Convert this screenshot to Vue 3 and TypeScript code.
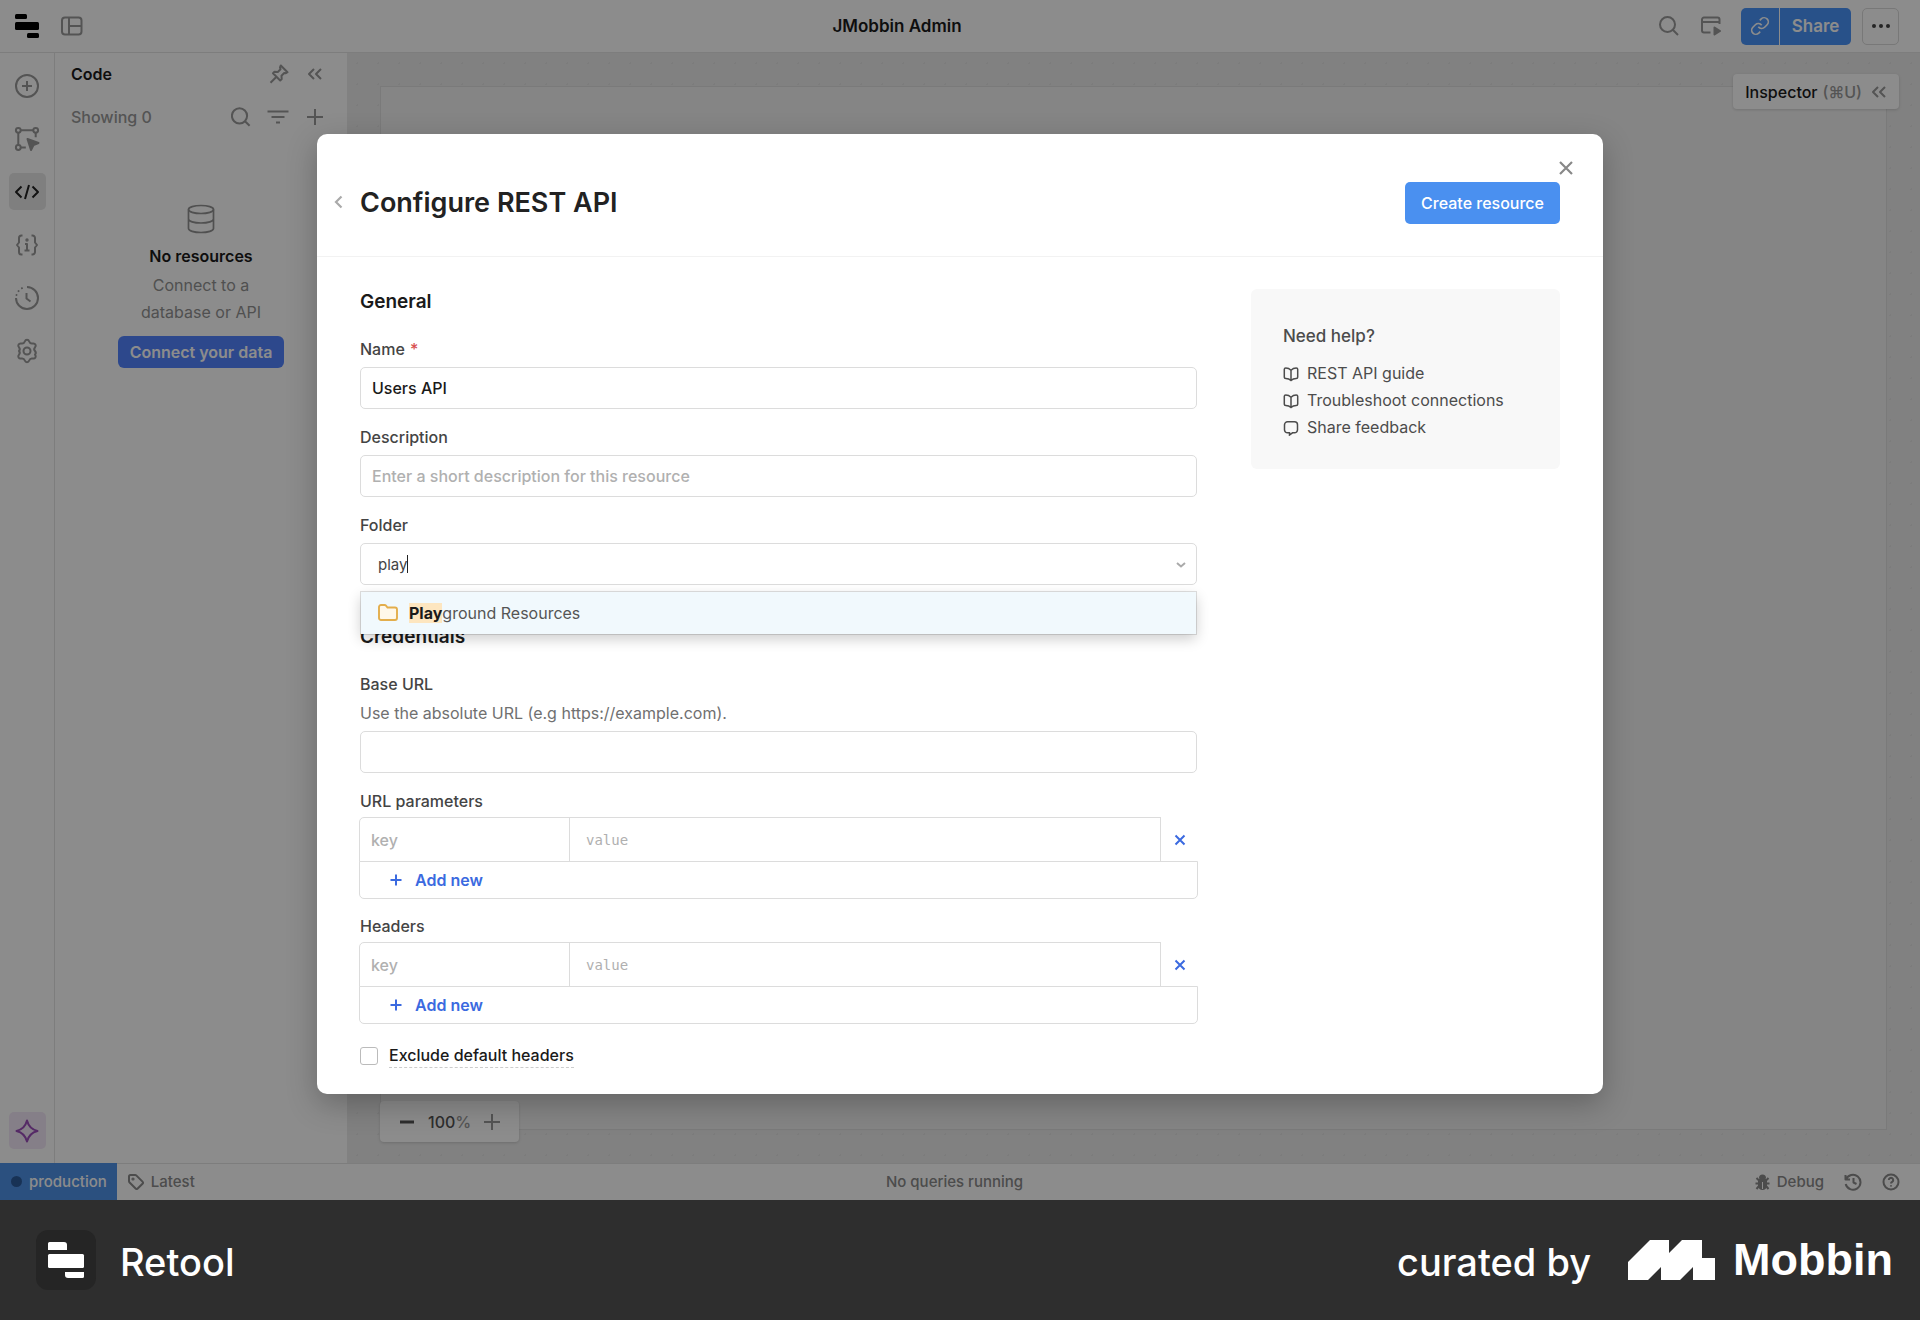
<script setup lang="ts">
import { ref } from 'vue'

interface KeyValueGroup {
  id: string
  title: string
}

const name = ref('Users API')
const description = ref('')
const folder = ref('play')
const baseUrl = ref('')
const excludeDefaults = ref(false)

const groups: KeyValueGroup[] = [
  { id: 'url-params', title: 'URL parameters' },
  { id: 'headers', title: 'Headers' },
]
</script>

<template>
  <div class="page">
    <div class="app">
      <header class="topbar">
        <div class="topbar-side">
          <svg class="logo" width="24" height="24" viewBox="0 0 24 24" aria-label="Retool">
            <rect x="0" y="0" width="12" height="5" rx="1.5" />
            <rect x="0" y="8" width="24" height="8" rx="1.5" />
            <rect x="12" y="19" width="12" height="5" rx="1.5" />
          </svg>
          <button class="icon-btn" aria-label="Toggle layout">
            <svg width="22" height="20" viewBox="0 0 22 20" class="line">
              <rect x="1" y="1.500" width="19.500" height="17" rx="3" />
              <path d="M8 1.500v17M8 10h12.500" />
            </svg>
          </button>
        </div>
        <h1 class="app-title">JMobbin Admin</h1>
        <div class="topbar-side end">
          <button class="icon-btn" aria-label="Search">
            <svg width="20" height="20" viewBox="0 0 20 20" class="line">
              <circle cx="8.500" cy="8.500" r="7.500" />
              <path d="M14 14l5 5" />
            </svg>
          </button>
          <button class="icon-btn preview" aria-label="Preview">
            <svg width="20" height="20" viewBox="0 0 20 20" class="line">
              <path d="M9.500 16.500H3a2 2 0 0 1-2-2V3.500a2 2 0 0 1 2-2h13.500a2 2 0 0 1 2 2V8M1 6h17.500" />
              <path class="solid" d="M13.500 11.500l5.500 3.500-5.500 3.500z" />
            </svg>
          </button>
          <div class="share">
            <button aria-label="Copy link" class="share-link">
              <svg width="20" height="20" viewBox="0 0 24 24" class="line">
                <path d="M10 13a5 5 0 0 0 7.540.540l3-3a5 5 0 0 0-7.070-7.070l-1.720 1.710" />
                <path d="M14 11a5 5 0 0 0-7.540-.540l-3 3a5 5 0 0 0 7.070 7.070l1.710-1.710" />
              </svg>
            </button>
            <button class="share-text">Share</button>
          </div>
          <button class="more" aria-label="More">
            <svg width="18" height="6" viewBox="0 0 18 6">
              <circle cx="2" cy="3" r="2" /><circle cx="9" cy="3" r="2" /><circle cx="16" cy="3" r="2" />
            </svg>
          </button>
        </div>
      </header>

      <div class="workspace">
        <nav class="rail">
          <button aria-label="Add component">
            <svg width="26" height="26" viewBox="0 0 26 26" class="line">
              <circle cx="13" cy="13" r="11" /><path d="M13 8v10M8 13h10" />
            </svg>
          </button>
          <button aria-label="Component tree">
            <svg width="26" height="26" viewBox="0 0 26 26" class="line">
              <circle cx="4.300" cy="4.300" r="2.400" /><circle cx="21.700" cy="4.300" r="2.400" /><circle cx="4.300" cy="21.500" r="2.400" />
              <path d="M6.800 4.300h12.400M4.300 6.800V19M21.700 6.800v4.500M6.800 21.500h5" />
              <path class="solid" d="M13.500 13l11 4-5 2L17 24z" />
            </svg>
          </button>
          <button aria-label="Code" class="active">
            <svg width="26" height="26" viewBox="0 0 26 26" class="line">
              <path d="M7.500 7.500L2 13l5.500 5.500M18.500 7.500L24 13l-5.500 5.500M15 6l-4 14" />
            </svg>
          </button>
          <button aria-label="State">
            <svg width="26" height="26" viewBox="0 0 26 26" class="line">
              <path d="M8.500 3.500H7.500A2.500 2.500 0 0 0 5 6v4.500L3 13l2 2.500V20a2.500 2.500 0 0 0 2.500 2.500h1M17.500 3.500h1A2.500 2.500 0 0 1 21 6v4.500l2 2.500-2 2.500V20a2.500 2.500 0 0 1-2.500 2.500h-1M11 12h2v6.500M10.500 18.500h5" />
              <circle cx="13" cy="8" r=".7" />
            </svg>
          </button>
          <button aria-label="History">
            <svg width="26" height="26" viewBox="0 0 26 26" class="line">
              <path d="M13 2a11 11 0 1 1-11 11" /><path d="M12.500 8v5.500l4 3" />
              <path stroke-dasharray=".1 4.300" stroke-linecap="round" d="M2.500 10A11 11 0 0 1 10 2.400" />
            </svg>
          </button>
          <button aria-label="Settings">
            <svg width="26" height="26" viewBox="0 0 26 26" class="line">
              <circle cx="13" cy="13" r="3.500" />
              <path d="M10.800 3.500c.8-2.400 3.600-2.400 4.400 0 .6 1.700 1.800 2.300 3.500 2 2.500-.5 4 1.800 2.300 3.800-1.200 1.400-1.200 2.300-.1 3.600 0 0 .1.100.1.100 1.200 1.400 1.200 2.300 0 3.700 1.700 2 .2 4.300-2.300 3.800-1.700-.3-2.900.3-3.500 2-.8 2.400-3.600 2.400-4.400 0-.6-1.700-1.800-2.300-3.500-2-2.500.5-4-1.800-2.300-3.800 1.200-1.400 1.200-2.300 0-3.700 1.200-1.400 1.200-2.300 0-3.700C3.300 7.300 4.800 5 7.300 5.500c1.700.3 2.900-.3 3.500-2z" />
            </svg>
          </button>
          <button aria-label="AI assist" class="assist">
            <svg width="24" height="24" viewBox="0 0 24 24" class="line">
              <path d="M12 1.500c1.500 6 4.500 9 10.500 10.500-6 1.500-9 4.500-10.500 10.500C10.500 16.500 7.500 13.500 1.500 12 7.500 10.500 10.500 7.500 12 1.500z" />
            </svg>
          </button>
        </nav>

        <aside class="panel">
          <div class="panel-row">
            <h2>Code</h2>
            <div class="tools">
              <button class="icon-btn" aria-label="Pin">
                <svg width="20" height="20" viewBox="0 0 20 20" class="line">
                  <path d="M11.800 1.500l6.700 6.700-1.600 1-1.700-.2-2.700 2.700.2 3.300-1.500 1.500L4 9.300l1.500-1.500 3.300.2 2.700-2.700-.5-2zM7.500 12.800L1.500 18.800" />
                </svg>
              </button>
              <button class="icon-btn" aria-label="Collapse">
                <svg width="20" height="20" viewBox="0 0 20 20" class="line">
                  <path d="M9 5l-5 5 5 5M16 5l-5 5 5 5" />
                </svg>
              </button>
            </div>
          </div>
          <div class="panel-row">
            <span class="showing">Showing 0</span>
            <div class="tools">
              <button class="icon-btn" aria-label="Search code">
                <svg width="20" height="20" viewBox="0 0 20 20" class="line">
                  <circle cx="8.500" cy="8.800" r="7.600" /><path d="M14 14.200l4.600 4.600" />
                </svg>
              </button>
              <button class="icon-btn" aria-label="Filter">
                <svg width="22" height="20" viewBox="0 0 22 20" class="line">
                  <path d="M.5 4.500h21M4.500 10h13M9 15.500h4" />
                </svg>
              </button>
              <button class="icon-btn" aria-label="Add">
                <svg width="20" height="20" viewBox="0 0 20 20" class="line">
                  <path d="M10 2v16M2 10h16" />
                </svg>
              </button>
            </div>
          </div>
          <div class="empty">
            <svg width="28" height="30" viewBox="0 0 28 30" class="line">
              <ellipse cx="14" cy="5.500" rx="12.500" ry="4" />
              <path d="M1.500 5.500v19c0 2.200 5.500 4 12.500 4s12.500-1.800 12.500-4v-19M1.500 15c0 2.200 5.500 4 12.500 4s12.500-1.800 12.500-4" />
            </svg>
            <strong>No resources</strong>
            <p>Connect to a<br />database or API</p>
            <button class="connect">Connect your data</button>
          </div>
        </aside>

        <main class="canvas">
          <div class="frame"></div>
          <button class="inspector">
            <span>Inspector</span> <span class="muted">(⌘U)</span>
            <svg width="16" height="16" viewBox="0 0 16 16" class="line">
              <path d="M7 3L2 8l5 5M14 3L9 8l5 5" />
            </svg>
          </button>
          <div class="zoom">
            <button aria-label="Zoom out">
              <svg width="16" height="16" viewBox="0 0 16 16" class="line minus"><path d="M1 8h14" /></svg>
            </button>
            <span class="zoom-value">100<span class="muted">%</span></span>
            <button aria-label="Zoom in">
              <svg width="16" height="16" viewBox="0 0 16 16" class="line"><path d="M8 0v16M0 8h16" /></svg>
            </button>
          </div>
        </main>
      </div>

      <div class="statusbar">
        <div class="status-side">
          <button class="env"><span class="env-dot"></span>production</button>
          <button class="status-item">
            <svg width="16" height="16" viewBox="0 0 16 16" class="line">
              <path d="M1 2.500A1.500 1.500 0 0 1 2.500 1h4.600a2 2 0 0 1 1.400.6l6 6a1.500 1.500 0 0 1 0 2.100l-4.800 4.800a1.500 1.500 0 0 1-2.100 0l-6-6A2 2 0 0 1 1 7.100z" />
              <circle cx="5" cy="5" r=".6" />
            </svg>
            Latest
          </button>
        </div>
        <span class="queries">No queries running</span>
        <div class="status-side end">
          <button class="status-item debug">
            <svg width="15" height="16" viewBox="0 0 15 16" class="line">
              <path class="solid" d="M4 6h7v5.500a3.500 3.500 0 0 1-7 0zM5 4a2.500 2.500 0 0 1 5 0z" />
              <path d="M1.500 4l2.500 2.500M13.500 4L11 6.500M.5 9.500h14M1.500 15L4 12M13.500 15L11 12" />
              <path d="M7.500 8v7" stroke="#fff" stroke-width="1" />
            </svg>
            Debug
          </button>
          <button class="status-item" aria-label="Release history">
            <svg width="18" height="18" viewBox="0 0 18 18" class="line">
              <path d="M2 6.500A7.500 7.500 0 1 1 1.700 11M1.500 2v4.500H6M9.500 5v4.500l3 1.500" />
            </svg>
          </button>
          <button class="status-item" aria-label="Help">
            <svg width="18" height="18" viewBox="0 0 18 18" class="line">
              <circle cx="9" cy="9" r="7.500" />
              <path d="M6.800 7a2.200 2.200 0 1 1 3.300 2c-.8.400-1.100.7-1.100 1.400M9 12.300v1.200" />
            </svg>
          </button>
        </div>
      </div>

      <div class="backdrop">
        <section class="modal" role="dialog" aria-labelledby="modal-title">
          <header class="modal-head">
            <button class="back" aria-label="Back">
              <svg width="10" height="14" viewBox="0 0 10 14"><path d="M8.500 1.500L3 7l5.500 5.500" /></svg>
            </button>
            <h2 id="modal-title">Configure REST API</h2>
            <button class="create">Create resource</button>
            <button class="close" aria-label="Close">
              <svg width="14" height="14" viewBox="0 0 14 14"><path d="M1 1l12 12M13 1L1 13" /></svg>
            </button>
          </header>

          <div class="modal-body">
            <form class="form" @submit.prevent>
              <h3>General</h3>
              <div class="field">
                <label for="name">Name <span class="required">*</span></label>
                <input id="name" v-model="name" type="text" />
              </div>
              <div class="field">
                <label for="description">Description</label>
                <input id="description" v-model="description" type="text" placeholder="Enter a short description for this resource" />
              </div>
              <div class="field">
                <label for="folder">Folder</label>
                <div class="combo">
                  <input id="folder" v-model="folder" type="text" role="combobox" aria-expanded="true" aria-controls="folder-list" />
                  <span class="caret"></span>
                  <svg class="chevron" width="10" height="8" viewBox="0 0 10 8"><path d="M1 2l4 3.500L9 2" /></svg>
                  <ul id="folder-list" class="options" role="listbox">
                    <li role="option" aria-selected="true">
                      <svg width="20" height="18" viewBox="0 0 20 18">
                        <path d="M1 3a2 2 0 0 1 2-2h3.500a2 2 0 0 1 1.500.7L9.500 3.500H17a2 2 0 0 1 2 2V14a2 2 0 0 1-2 2H3a2 2 0 0 1-2-2z" />
                      </svg>
                      <span><mark>Play</mark>ground Resources</span>
                    </li>
                  </ul>
                </div>
              </div>

              <h3 class="second">Credentials</h3>
              <div class="field">
                <label for="base-url">Base URL</label>
                <p class="hint">Use the absolute URL (e.g https://example.com).</p>
                <input id="base-url" v-model="baseUrl" type="text" />
              </div>

              <div v-for="g in groups" :key="g.id" class="kv-group" role="group" :aria-labelledby="g.id">
                <div :id="g.id" class="kv-title">{{ g.title }}</div>
                <div class="kv">
                  <div class="kv-row">
                    <input class="kv-key" type="text" placeholder="key" :aria-label="g.title + ' key'" />
                    <input class="kv-value" type="text" placeholder="value" :aria-label="g.title + ' value'" />
                    <button type="button" class="kv-remove" aria-label="Remove">
                      <svg width="12" height="12" viewBox="0 0 12 12"><path d="M1.500 1.500l9 9M10.500 1.500l-9 9" /></svg>
                    </button>
                  </div>
                  <div class="kv-add">
                    <button type="button">
                      <svg width="12" height="12" viewBox="0 0 12 12"><path d="M6 .5v11M.5 6h11" /></svg>
                      Add new
                    </button>
                  </div>
                </div>
              </div>

              <div class="check">
                <input id="exclude" v-model="excludeDefaults" type="checkbox" />
                <label for="exclude">Exclude default headers</label>
              </div>
            </form>

            <aside class="help">
              <h4>Need help?</h4>
              <a href="#">
                <svg width="16" height="16" viewBox="0 0 16 16"><path d="M8 4.200C6.500 2.700 4.300 2 2.800 2 1.800 2 1.300 2.500 1.300 3.300v8c0 .8.500 1.200 1.500 1.200 2 0 3.700.5 5.200 2 1.500-1.500 3.200-2 5.200-2 1 0 1.500-.4 1.500-1.200v-8c0-.8-.5-1.300-1.500-1.300C11.700 2 9.500 2.700 8 4.200zM8 4.200v10.300" /></svg>
                REST API guide
              </a>
              <a href="#">
                <svg width="16" height="16" viewBox="0 0 16 16"><path d="M8 4.200C6.500 2.700 4.300 2 2.800 2 1.800 2 1.300 2.500 1.300 3.300v8c0 .8.500 1.200 1.500 1.200 2 0 3.700.5 5.200 2 1.500-1.500 3.200-2 5.200-2 1 0 1.500-.4 1.500-1.200v-8c0-.8-.5-1.300-1.500-1.300C11.700 2 9.500 2.700 8 4.200zM8 4.200v10.300" /></svg>
                Troubleshoot connections
              </a>
              <a href="#">
                <svg width="16" height="16" viewBox="0 0 16 16"><path d="M4.500 1.800h7a3 3 0 0 1 3 3v5a3 3 0 0 1-3 3H9.500L6.500 15v-2.200h-2a3 3 0 0 1-3-3v-5a3 3 0 0 1 3-3z" /></svg>
                Share feedback
              </a>
            </aside>
          </div>
        </section>
      </div>
    </div>

    <footer class="credit">
      <div class="brand">
        <svg width="60" height="60" viewBox="0 0 60 60" aria-hidden="true">
          <rect width="60" height="60" rx="12" fill="#252525" />
          <g fill="#fff">
            <path d="M13.500 12H28a3 3 0 0 1 3 3v5H12v-6.500a1.500 1.500 0 0 1 1.500-1.500z" />
            <rect x="12" y="24" width="36" height="14" rx="1.500" />
            <path d="M29 42h19v4.500a1.500 1.500 0 0 1-1.500 1.500H32a3 3 0 0 1-3-3z" />
          </g>
        </svg>
        <span>Retool</span>
      </div>
      <div class="brand curated">
        <span>curated by</span>
        <svg width="87" height="40" viewBox="0 0 87 40" aria-hidden="true">
          <path fill="#fff" d="M0 22L22 0h19v13L54 0h20v18h13v22H65V27L52 40H33V27L20 40H0z" />
        </svg>
        <strong>Mobbin</strong>
      </div>
    </footer>
  </div>
</template>

<style>
body {
  margin: 0;
}
</style>

<style scoped>
.page {
  display: flex;
  flex-direction: column;
  min-height: 100vh;
  font-family: Inter, "Liberation Sans", sans-serif;
  font-size: 16px;
  line-height: 20px;
  color: #1a1a1a;
}
* {
  box-sizing: border-box;
}
button {
  display: flex;
  align-items: center;
  justify-content: center;
  padding: 0;
  border: 0;
  background: none;
  font: inherit;
  color: inherit;
  flex: none;
}
input {
  font: inherit;
}
h1, h2, h3, h4, p, ul {
  margin: 0;
  padding: 0;
  font-size: 16px;
}
svg {
  display: block;
  flex: none;
}
.line {
  fill: none;
  stroke: currentColor;
  stroke-width: 2;
  stroke-linejoin: round;
}
.line .solid {
  fill: currentColor;
}
.muted {
  color: #999;
}

.app {
  position: relative;
  flex: 1;
  display: flex;
  flex-direction: column;
  background: #fff;
}
.topbar {
  display: flex;
  align-items: center;
  height: 53px;
  padding: 0 21px 0 15px;
  border-bottom: 1px solid #e4e4e4;
}
.topbar-side {
  flex: 1;
  display: flex;
  align-items: center;
  gap: 22px;
}
.end {
  justify-content: flex-end;
}
.app-title {
  font-size: 17px;
  font-weight: 600;
  padding-right: 120px;
}
.icon-btn {
  color: #999;
}
.preview {
  margin-right: -2px;
}
.share {
  display: flex;
  gap: 1px;
  font-weight: 600;
  color: #fff;
}
.share button {
  height: 37px;
  background: #4a94fa;
}
.share .share-link {
  width: 38px;
  border-radius: 5px 0 0 5px;
}
.share .share-text {
  width: 71px;
  border-radius: 0 5px 5px 0;
  font-size: 17px;
}
.more {
  width: 37px;
  height: 37px;
  margin-left: -11px;
  border: 1px solid #dadada;
  border-radius: 5px;
  color: #444;
  fill: currentColor;
}

.workspace {
  flex: 1;
  display: flex;
}
.rail {
  width: 55px;
  display: flex;
  flex-direction: column;
  gap: 16px;
  align-items: center;
  padding: 14px 0 14px;
  border-right: 1px solid #e4e4e4;
  color: #999;
}
.rail button {
  width: 37px;
  height: 37px;
  border-radius: 5px;
}
.rail .active {
  background: #e8e8e8;
  color: #222;
}
.rail .assist {
  margin-top: auto;
  background: #f3e8f7;
  color: #9b4dba;
}
.panel {
  width: 292px;
  padding: 11px 22px 0 16px;
}
.panel-row {
  display: flex;
  align-items: center;
  justify-content: space-between;
  height: 20px;
  margin-bottom: 23px;
}
.panel h2 {
  font-weight: 600;
}
.showing {
  color: #999;
  font-weight: 500;
}
.tools {
  display: flex;
  gap: 16px;
}
.empty {
  display: flex;
  flex-direction: column;
  align-items: center;
  padding: 54px 0 0 6px;
  text-align: center;
}
.empty svg,
.empty p {
  color: #929292;
}
.empty svg {
  margin-bottom: 12px;
  stroke-width: 1.700;
}
.empty strong {
  font-weight: 600;
}
.empty p {
  margin: 6px 0 10px;
  line-height: 27px;
}
.connect {
  height: 32px;
  padding: 0 12px;
  border-radius: 6px;
  background: #5284ff;
  color: #fff;
  font-weight: 600;
}
.canvas {
  position: relative;
  flex: 1;
  display: flex;
  padding: 33px;
  background: radial-gradient(circle, #e2e2e2 1px, #ebebeb 1px);
  background-size: 21px 21px;
}
.frame {
  flex: 1;
  border: 1px solid #dedede;
  background: #f3f3f3;
}
.inspector {
  position: absolute;
  top: 21px;
  right: 21px;
  height: 35px;
  padding: 0 12px;
  gap: 5px;
  border-radius: 4px;
  background: #fff;
  box-shadow: 0 1px 3px rgba(0, 0, 0, 0.15);
  font-weight: 500;
}
.inspector svg {
  margin-left: 4px;
  color: #999;
}
.zoom {
  position: absolute;
  left: 33px;
  bottom: 21px;
  display: flex;
  align-items: center;
  gap: 13px;
  height: 41px;
  padding: 0 19px;
  border-radius: 4px;
  background: #fff;
  box-shadow: 0 1px 3px rgba(0, 0, 0, 0.15);
  font-weight: 500;
  color: #555;
}
.zoom .minus {
  stroke-width: 3;
}
.zoom button:last-child {
  color: #999;
}

.statusbar {
  display: flex;
  align-items: center;
  height: 37px;
  padding-right: 20px;
  border-top: 1px solid #e4e4e4;
  font-size: 15px;
  font-weight: 500;
  color: #8a8a8a;
}
.status-side {
  flex: 1;
  display: flex;
  align-items: center;
  gap: 11px;
}
.status-side.end {
  gap: 20px;
}
.env {
  height: 37px;
  margin-top: -1px;
  padding: 0 10px 0 11px;
  gap: 7px;
  background: #4f92e8;
  color: #fff;
}
.env-dot {
  width: 11px;
  height: 11px;
  border-radius: 50%;
  background: #2d5c9c;
}
.status-item {
  gap: 7px;
}
.queries {
  padding-left: 9px;
}

.backdrop {
  position: absolute;
  inset: 0;
  display: flex;
  align-items: flex-start;
  justify-content: center;
  padding: 134px 32px 0;
  background: rgba(0, 0, 0, 0.45);
}
.modal {
  width: 100%;
  max-width: 1286px;
  border-radius: 10px;
  background: #fff;
  box-shadow: 0 10px 30px rgba(0, 0, 0, 0.25);
}
.modal-head {
  position: relative;
  display: flex;
  align-items: center;
  justify-content: space-between;
  height: 123px;
  padding: 15px 43px 0;
  border-bottom: 1px solid #f2f2f2;
}
.modal-head h2 {
  font-size: 27px;
  line-height: 34px;
  font-weight: 600;
  color: #222;
}
.modal-head path {
  fill: none;
  stroke: currentColor;
  stroke-width: 2.200;
}
.back {
  position: absolute;
  left: 16px;
  top: 61px;
  color: #aaa;
}
.close {
  position: absolute;
  right: 30px;
  top: 27px;
  color: #888;
}
.create {
  height: 42px;
  padding: 0 16px;
  border-radius: 5px;
  background: #4a90f0;
  color: #fff;
  font-weight: 500;
}
.modal-body {
  display: flex;
  align-items: flex-start;
  gap: 54px;
  padding: 32px 43px 26px;
}
.form {
  flex: 1;
}
h3 {
  margin-bottom: 24px;
  font-size: 19px;
  line-height: 26px;
  font-weight: 600;
}
h3.second {
  margin-top: 39px;
}
.field {
  margin-bottom: 18px;
}
.field label,
.kv-title {
  display: block;
  font-weight: 500;
  color: #444;
}
.field label {
  margin-bottom: 8px;
}
.required {
  margin-left: 1px;
  color: #d85050;
}
.field input {
  display: block;
  width: 100%;
  height: 42px;
  padding: 0 11px;
  border: 1px solid #dcdcdc;
  border-radius: 5px;
  background: #fff;
  font-weight: 500;
  color: #1a1a1a;
  outline: 0;
}
input::placeholder {
  color: #b0b0b0;
  opacity: 1;
}
.hint {
  margin-bottom: 7px;
  line-height: 22px;
  color: #707070;
}
.combo {
  position: relative;
}
.combo #folder {
  padding: 0 17px;
  font-size: 15px;
  font-weight: 400;
  color: #444;
}
.caret {
  position: absolute;
  left: 47px;
  top: 12px;
  width: 1px;
  height: 18px;
  background: #222;
}
.chevron {
  position: absolute;
  right: 11px;
  top: 18px;
  fill: none;
  stroke: #aaa;
  stroke-width: 2;
}
.options {
  position: absolute;
  top: 49px;
  left: 1px;
  right: 1px;
  list-style: none;
  box-shadow: 0 0 0 1px rgba(0, 0, 0, 0.12), 0 5px 14px rgba(0, 0, 0, 0.2);
}
.options li {
  display: flex;
  align-items: center;
  gap: 11px;
  height: 42px;
  padding: 0 17px;
  background: #f1f9fd;
  color: #555;
}
.options svg {
  fill: #fff8ea;
  stroke: #e3ae4c;
  stroke-width: 1.900;
}
.options mark {
  background: #fde6c0;
  color: #1a1a1a;
  font-weight: 700;
}
.kv-title {
  margin-bottom: 6px;
}
.kv-group {
  margin-bottom: 17px;
}
.kv {
  margin: 0 -1px;
}
.kv-row {
  position: relative;
  display: flex;
  height: 45px;
}
.kv-row input {
  height: 45px;
  border: 1px solid #dcdcdc;
  background: #fff;
  font-weight: 500;
  outline: 0;
}
.kv-row .kv-key {
  width: 211px;
  padding: 0 11px;
  border-radius: 5px 0 0 0;
}
.kv-row .kv-value {
  flex: 1;
  margin-left: -1px;
  padding: 0 16px;
  font-family: "DejaVu Sans Mono", monospace;
  font-size: 14px;
  font-weight: 400;
}
.kv-remove {
  width: 37px;
  color: #3b6ae0;
}
.kv path {
  fill: none;
  stroke: currentColor;
  stroke-width: 2;
}
.kv-add {
  height: 38px;
  margin-top: -1px;
  display: flex;
  align-items: center;
  padding-left: 30px;
  border: 1px solid #dcdcdc;
  border-radius: 0 0 5px 5px;
}
.kv-add button {
  gap: 13px;
  color: #3b6ae0;
  font-weight: 600;
}
.check {
  display: flex;
  align-items: flex-start;
  gap: 11px;
  padding-top: 6px;
}
.check input {
  appearance: none;
  width: 18px;
  height: 18px;
  margin: 0;
  border: 1px solid #bbb;
  border-radius: 3px;
}
.check label {
  margin-top: -2px;
  padding-bottom: 2px;
  border-bottom: 1px dashed #ccc;
  font-weight: 500;
}
.help {
  width: 309px;
  padding: 32px 32px 28px;
  border-radius: 6px;
  background: #f8f8f8;
  color: #4c4c4c;
}
.help h4 {
  margin-bottom: 9px;
  font-size: 17px;
  line-height: 30px;
  font-weight: 500;
}
.help a {
  display: flex;
  align-items: center;
  gap: 8px;
  line-height: 27px;
  color: inherit;
  text-decoration: none;
}
.help svg {
  fill: none;
  stroke: currentColor;
  stroke-width: 1.500;
}

.credit {
  display: flex;
  align-items: center;
  justify-content: space-between;
  height: 120px;
  padding: 0 27px 0 36px;
  background: #2e2e2e;
  color: #fff;
}
.brand {
  display: flex;
  align-items: center;
  gap: 24px;
  font-size: 38px;
  line-height: 48px;
  font-weight: 500;
}
.brand span {
  padding-top: 4px;
}
.curated svg {
  margin: 0 -6px 0 13px;
}
.brand strong {
  font-size: 45px;
  font-family: "Liberation Sans", sans-serif;
}
</style>
